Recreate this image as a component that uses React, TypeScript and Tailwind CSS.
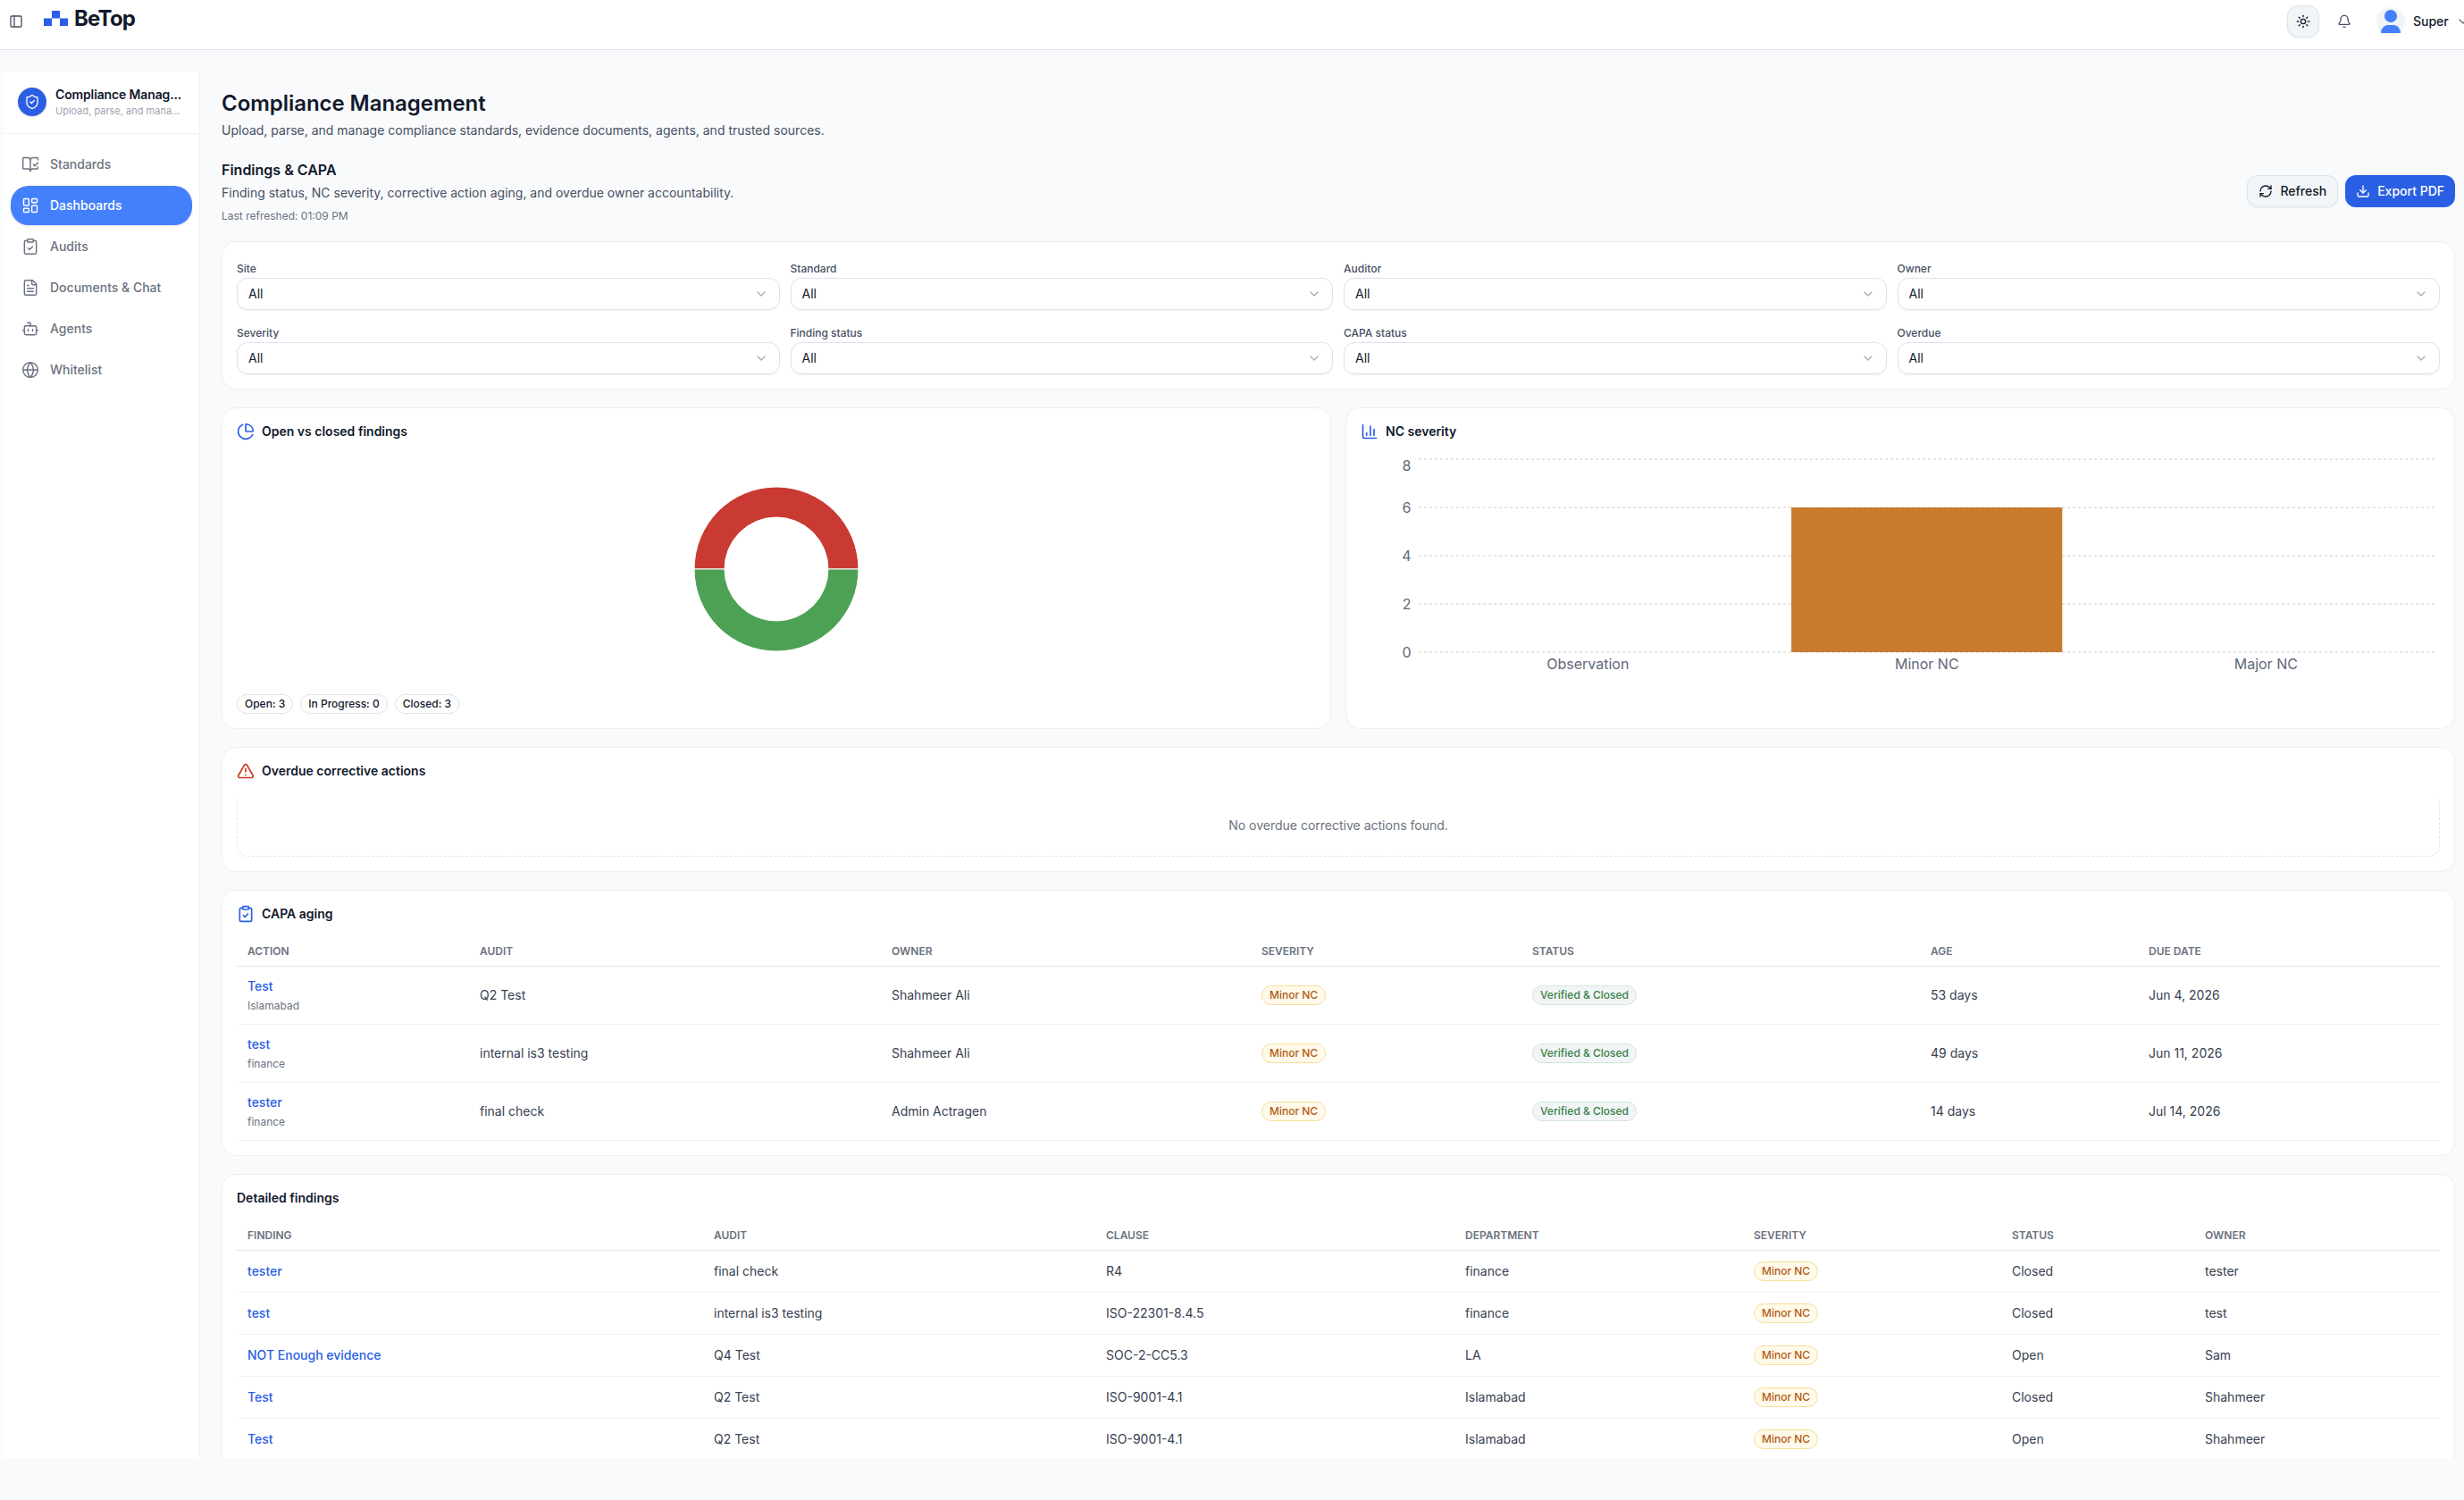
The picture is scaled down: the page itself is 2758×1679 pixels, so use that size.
import type { ReactNode } from "react";
import {
  Bell,
  BookOpenCheck,
  Bot,
  ChartColumn,
  ChartPie,
  ChevronDown,
  ClipboardCheck,
  Download,
  FileText,
  Globe,
  LayoutDashboard,
  PanelLeft,
  RefreshCw,
  ShieldCheck,
  Sun,
  TriangleAlert,
} from "lucide-react";
import clsx from "clsx";

const navItems = [
  { label: "Standards", icon: BookOpenCheck },
  { label: "Dashboards", icon: LayoutDashboard, active: true },
  { label: "Audits", icon: ClipboardCheck },
  { label: "Documents & Chat", icon: FileText },
  { label: "Agents", icon: Bot },
  { label: "Whitelist", icon: Globe },
];

const filters = [
  "Site",
  "Standard",
  "Auditor",
  "Owner",
  "Severity",
  "Finding status",
  "CAPA status",
  "Overdue",
];

const capaRows = [
  { action: "Test", site: "Islamabad", audit: "Q2 Test", owner: "Shahmeer Ali", age: "53 days", due: "Jun 4, 2026" },
  { action: "test", site: "finance", audit: "internal is3 testing", owner: "Shahmeer Ali", age: "49 days", due: "Jun 11, 2026" },
  { action: "tester", site: "finance", audit: "final check", owner: "Admin Actragen", age: "14 days", due: "Jul 14, 2026" },
];

const findings = [
  { finding: "tester", audit: "final check", clause: "R4", department: "finance", status: "Closed", owner: "tester" },
  { finding: "test", audit: "internal is3 testing", clause: "ISO-22301-8.4.5", department: "finance", status: "Closed", owner: "test" },
  { finding: "NOT Enough evidence", audit: "Q4 Test", clause: "SOC-2-CC5.3", department: "LA", status: "Open", owner: "Sam" },
  { finding: "Test", audit: "Q2 Test", clause: "ISO-9001-4.1", department: "Islamabad", status: "Closed", owner: "Shahmeer" },
  { finding: "Test", audit: "Q2 Test", clause: "ISO-9001-4.1", department: "Islamabad", status: "Open", owner: "Shahmeer" },
];

const Logo = () => (
  <div className="flex items-start">
    <svg width="27" height="17" viewBox="0 0 27 17" className="mt-3 fill-[#2b5fe3]">
      <rect x="9" y="0" width="9" height="8.5" />
      <rect x="0" y="8.5" width="9" height="8.5" />
      <rect x="18" y="8.5" width="9" height="8.5" />
    </svg>
    <span className="ml-[7px] mt-[5px] text-[24px] leading-[32px] font-bold tracking-[-0.035em] text-[#12192c]">
      BeTop
    </span>
  </div>
);

const Header = () => (
  <header className="flex h-14 shrink-0 items-start justify-between overflow-hidden border-b border-[#e2e6ec] bg-white pl-2.5">
    <div className="flex items-start">
      <PanelLeft size={16} className="mt-4 text-[#475063]" />
      <div className="ml-[23px]">
        <Logo />
      </div>
    </div>
    <div className="flex h-12 w-[198px] shrink-0 items-center">
      <button className="flex size-9 shrink-0 items-center justify-center rounded-xl border border-[#dbe3ee] bg-[#f2f5f7] text-[#12192c] shadow-xs">
        <Sun size={16} />
      </button>
      <Bell size={16} className="ml-5 shrink-0 text-[#475063]" />
      <svg width="32" height="32" viewBox="0 0 32 32" className="ml-7 shrink-0">
        <circle cx="16" cy="16" r="16" fill="#f1f4f6" />
        <circle cx="16" cy="10" r="7" fill="#4480fb" />
        <path d="M5 29c0-5 3.500-9 8-9h6c4.500 0 8 4 8 9z" fill="#4480fb" />
      </svg>
      <span className="ml-[9px] text-sm font-medium text-[#12192c]">Super</span>
      <ChevronDown size={16} className="ml-2 shrink-0 text-[#6b7280]" />
    </div>
  </header>
);

const Sidebar = () => (
  <aside className="ml-1 mt-6 w-[220px] shrink-0 border-r border-[#eef0f3] bg-white">
    <div className="flex h-[70px] items-start border-b border-[#eef0f3] pl-4 pt-[18px]">
      <div className="flex size-8 shrink-0 items-center justify-center rounded-full bg-[#2b5fe3] text-white shadow-sm">
        <ShieldCheck size={18} strokeWidth={1.75} />
      </div>
      <div className="ml-2.5 whitespace-nowrap">
        <div className="text-sm leading-4 font-semibold tracking-[-0.01em] text-[#12192c]">Compliance Manag...</div>
        <div className="mt-0.5 text-[11px] leading-[17px] text-[#9ca3af]">Upload, parse, and mana...</div>
      </div>
    </div>
    <nav className="flex flex-col gap-0.5 pl-2 pr-2 pt-3">
      {navItems.map(({ label, icon: Icon, active }) => (
        <a
          key={label}
          className={clsx(
            "flex h-11 items-center gap-3 rounded-[20px] px-3 text-sm font-medium",
            active ? "bg-[#4480fb] text-white shadow-sm" : "text-[#6b7280]",
          )}
        >
          <Icon size={20} strokeWidth={1.75} />
          {label}
        </a>
      ))}
    </nav>
  </aside>
);

const Card = ({ children, className }: { children: ReactNode; className?: string }) => (
  <section className={clsx("rounded-2xl border border-[#eceff2] bg-white p-4", className)}>{children}</section>
);

const CardTitle = ({ icon, children }: { icon?: ReactNode; children: ReactNode }) => (
  <h3 className="flex h-5 items-center gap-2 text-sm font-semibold text-[#12192c]">
    {icon}
    {children}
  </h3>
);

const Select = ({ label }: { label: string }) => (
  <div>
    <div className="h-6 pt-1.5 text-xs font-medium text-[#475063]">{label}</div>
    <div className="flex h-9 items-center justify-between rounded-xl border border-[#dbe3ee] px-3 text-sm text-[#12192c] shadow-xs">
      All
      <ChevronDown size={16} className="text-[#a3afb8]" />
    </div>
  </div>
);

const Pill = ({ children }: { children: ReactNode }) => (
  <span className="inline-flex h-[22px] items-center rounded-full border border-[#dbe3ee] px-2 text-xs font-medium text-[#12192c]">
    {children}
  </span>
);

const SeverityBadge = () => (
  <span className="flex h-[22px] w-fit items-center rounded-full border border-[#f6de9c] bg-[#fffaea] px-2 text-xs font-medium text-[#b35a14]">
    Minor NC
  </span>
);

const StatusBadge = () => (
  <span className="flex h-[22px] w-fit items-center rounded-full border border-[#d3e5db] bg-[#f2f5f7] px-2 text-xs font-medium text-[#3b8045]">
    Verified &amp; Closed
  </span>
);

const Donut = () => (
  <svg width="186" height="186" viewBox="-93 -93 186 186" stroke="#fff" strokeWidth="1">
    <path d="M-92 0A92 92 0 0 1 92 0H58A58 58 0 0 0 -58 0Z" fill="#c93a32" />
    <path d="M-92 0A92 92 0 0 0 92 0H58A58 58 0 0 1 -58 0Z" fill="#4da155" />
  </svg>
);

const ticks = [
  { value: 8, y: 9, labelY: 16 },
  { value: 6, y: 63, labelY: 63 },
  { value: 4, y: 117, labelY: 117 },
  { value: 2, y: 171, labelY: 171 },
  { value: 0, y: 225, labelY: 225 },
];

const SeverityChart = () => (
  <svg width="1208" height="264" viewBox="0 0 1208 264" className="mt-3 fill-[#5f6878] text-base">
    {ticks.map((t) => (
      <g key={t.value}>
        <line x1="65" x2="1204" y1={t.y} y2={t.y} stroke="#ccc" strokeDasharray="3 3" />
        <text x="56.5" y={t.labelY + 6} textAnchor="end">
          {t.value}
        </text>
      </g>
    ))}
    <rect x="482.1" y="63" width="303.2" height="162" fill="#c97a2d" />
    <text x="254.3" y="244" textAnchor="middle">Observation</text>
    <text x="633.8" y="244" textAnchor="middle">Minor NC</text>
    <text x="1013.3" y="244" textAnchor="middle">Major NC</text>
  </svg>
);

const HeadRow = ({ columns }: { columns: string[] }) => (
  <thead>
    <tr className="h-[33px] text-left text-xs text-[#6b7280] uppercase">
      {columns.map((c) => (
        <th key={c} className="border-b border-[#e3e5e8] px-3 py-0 font-semibold">
          {c}
        </th>
      ))}
    </tr>
  </thead>
);

const Cell = ({ children, className }: { children: ReactNode; className?: string }) => (
  <td className={clsx("border-b border-[#f1f3f5] px-3 py-0", className)}>{children}</td>
);

const CapaTable = () => (
  <table className="mt-4 w-full table-fixed border-separate border-spacing-0 text-sm text-[#374151]">
    <colgroup>
      <col className="w-[260px]" />
      <col className="w-[461px]" />
      <col className="w-[414px]" />
      <col className="w-[303px]" />
      <col className="w-[446px]" />
      <col className="w-[244px]" />
      <col className="w-[338px]" />
    </colgroup>
    <HeadRow columns={["Action", "Audit", "Owner", "Severity", "Status", "Age", "Due date"]} />
    <tbody>
      {capaRows.map((row) => (
        <tr key={row.action} className="h-[65px]">
          <Cell>
            <div className="font-medium text-[#2b5fe3]">{row.action}</div>
            <div className="mt-1 text-xs text-[#6b7280]">{row.site}</div>
          </Cell>
          <Cell>{row.audit}</Cell>
          <Cell>{row.owner}</Cell>
          <Cell>
            <SeverityBadge />
          </Cell>
          <Cell>
            <StatusBadge />
          </Cell>
          <Cell>{row.age}</Cell>
          <Cell>{row.due}</Cell>
        </tr>
      ))}
    </tbody>
  </table>
);

const FindingsTable = () => (
  <table className="mt-4 w-full table-fixed border-separate border-spacing-0 text-sm text-[#374151]">
    <colgroup>
      <col className="w-[522px]" />
      <col className="w-[439px]" />
      <col className="w-[402px]" />
      <col className="w-[323px]" />
      <col className="w-[289px]" />
      <col className="w-[216px]" />
      <col className="w-[275px]" />
    </colgroup>
    <HeadRow columns={["Finding", "Audit", "Clause", "Department", "Severity", "Status", "Owner"]} />
    <tbody>
      {findings.map((row, i) => (
        <tr key={i} className="h-[47px]">
          <Cell className="font-medium text-[#2b5fe3]">{row.finding}</Cell>
          <Cell>{row.audit}</Cell>
          <Cell>{row.clause}</Cell>
          <Cell>{row.department}</Cell>
          <Cell>
            <SeverityBadge />
          </Cell>
          <Cell>{row.status}</Cell>
          <Cell>{row.owner}</Cell>
        </tr>
      ))}
    </tbody>
  </table>
);

const App = () => {
  return (
    <div className="flex h-[1679px] w-[2758px] flex-col overflow-hidden bg-[#f9fafc] pb-[47px] font-['Inter',sans-serif] antialiased">
      <Header />
      <div className="flex min-h-0 flex-1">
        <Sidebar />
        <main className="ml-6 w-[2500px] shrink-0 overflow-hidden pt-11">
          <h1 className="text-2xl leading-8 font-semibold tracking-[-0.002em] text-[#12192c]">Compliance Management</h1>
          <p className="mt-1 text-sm text-[#475063]">
            Upload, parse, and manage compliance standards, evidence documents, agents, and trusted sources.
          </p>

          <div className="mt-[22px] flex items-center justify-between">
            <div>
              <h2 className="text-base font-semibold text-[#12192c]">Findings &amp; CAPA</h2>
              <p className="mt-1 text-sm text-[#475063]">
                Finding status, NC severity, corrective action aging, and overdue owner accountability.
              </p>
              <p className="mt-2 text-xs text-[#6b7280]">Last refreshed: 01:09 PM</p>
            </div>
            <div className="flex gap-2">
              <button className="flex h-9 items-center gap-2 rounded-xl border border-[#dbe3ee] bg-[#f2f5f7] px-3 text-sm font-medium text-[#12192c] shadow-xs">
                <RefreshCw size={16} />
                Refresh
              </button>
              <button className="flex h-9 items-center gap-2 rounded-xl bg-[#2b5fe3] px-3 text-sm font-medium text-white">
                <Download size={16} />
                Export PDF
              </button>
            </div>
          </div>

          <div className="mt-5 flex flex-col gap-5">
            <Card className="grid grid-cols-4 gap-3">
              {filters.map((f) => (
                <Select key={f} label={f} />
              ))}
            </Card>

            <div className="grid grid-cols-2 gap-4">
              <Card className="h-[360px]">
                <CardTitle icon={<ChartPie size={20} className="text-[#2b5fe3]" />}>Open vs closed findings</CardTitle>
                <div className="mt-3 flex h-[264px] items-center justify-center">
                  <Donut />
                </div>
                <div className="mt-2 flex gap-2">
                  <Pill>Open: 3</Pill>
                  <Pill>In Progress: 0</Pill>
                  <Pill>Closed: 3</Pill>
                </div>
              </Card>
              <Card className="h-[360px]">
                <CardTitle icon={<ChartColumn size={20} className="text-[#2b5fe3]" />}>NC severity</CardTitle>
                <SeverityChart />
              </Card>
            </div>

            <Card className="h-[140px]">
              <CardTitle icon={<TriangleAlert size={20} className="text-[#c8371f]" />}>
                Overdue corrective actions
              </CardTitle>
              <div className="mt-5 overflow-hidden">
                <div className="-mt-1 flex h-[70px] items-center justify-center rounded-xl border border-dashed border-[#e3e5e8] text-sm text-[#6b7280]">
                  No overdue corrective actions found.
                </div>
              </div>
            </Card>

            <Card>
              <CardTitle icon={<ClipboardCheck size={20} className="text-[#2b5fe3]" />}>CAPA aging</CardTitle>
              <CapaTable />
            </Card>

            <Card>
              <CardTitle>Detailed findings</CardTitle>
              <FindingsTable />
            </Card>
          </div>
        </main>
      </div>
    </div>
  );
};

export default App;
